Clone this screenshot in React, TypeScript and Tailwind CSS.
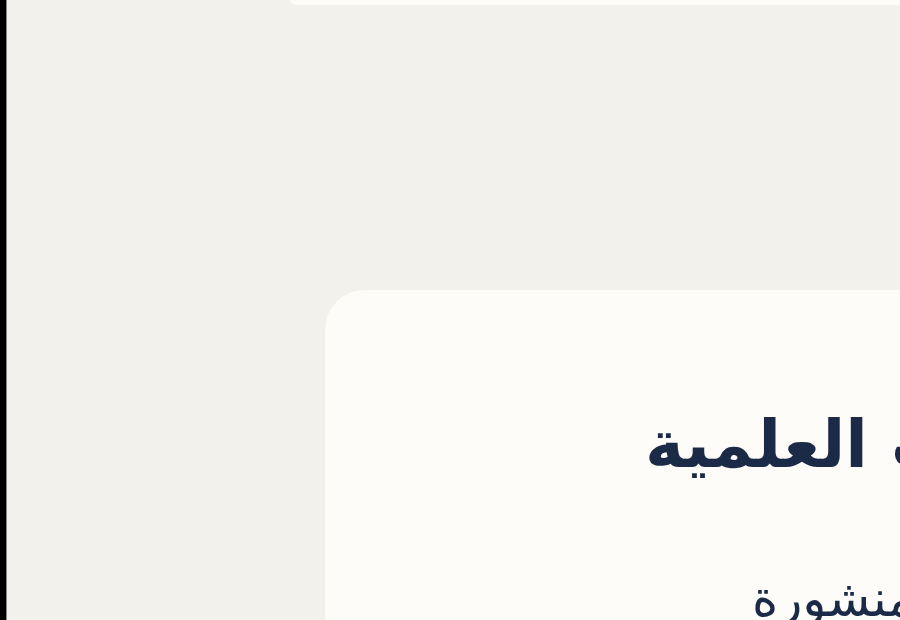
export default function App() {
  return (
    <div className="flex h-[620px] w-[900px] overflow-hidden bg-[#f3f1ec]">
      {/* left window edge */}
      <div className="w-[6px] shrink-0 bg-black" />
      <div className="w-px shrink-0 bg-[#8a8a8a]" />

      <div className="flex min-w-0 flex-1 flex-col">
        {/* bottom edge of the card above */}
        <div className="ml-[283px] h-[5px] shrink-0 rounded-bl-[24px] bg-[#fdfcf8]" />

        {/* publications card */}
        <div
          className="ml-[318px] mt-[285px] w-[1400px] shrink-0 flex-1 rounded-tl-[40px] bg-[#fdfcf8] pt-[122px]"
          style={{ fontFamily: '"DejaVu Sans", "Noto Sans", sans-serif' }}
        >
          <h2
            dir="rtl"
            className="whitespace-nowrap pl-[320px] text-left text-[66px] font-bold leading-none text-[#1b2a47]"
          >
            الأبحاث العلمية
          </h2>
          <p
            dir="rtl"
            className="mt-[96px] whitespace-nowrap pl-[427px] text-left text-[50px] leading-none text-[#1b2a47]"
          >
            أكثر من ٥٠ ورقة بحثية منشورة
          </p>
        </div>
      </div>
    </div>
  );
}
